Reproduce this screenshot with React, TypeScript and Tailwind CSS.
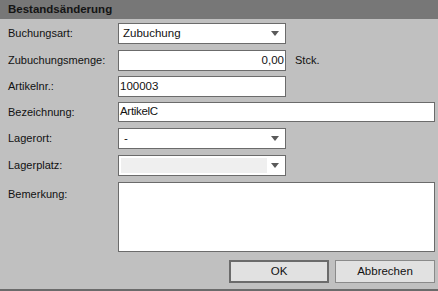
import React from "react";

const font = { fontFamily: '"Liberation Sans", Arial, sans-serif' };

function Arrow() {
  return (
    <svg width="8" height="5" viewBox="0 0 8 5" className="block">
      <path d="M0 0 H8 L4 5 Z" fill="#5a5a5a" />
    </svg>
  );
}

function Row({ label, children, mt, h = "h-[21px]", top = false }: { label: string; children: React.ReactNode; mt: string; h?: string; top?: boolean }) {
  return (
    <div className={`flex ${mt} ${h}`}>
      <div className={`w-[110px] shrink-0 text-[11px] text-[#111] ${top ? "pt-[4px]" : "flex items-center"}`}>{label}</div>
      {children}
    </div>
  );
}

export default function App() {
  return (
    <div className="w-[438px] h-[291px] bg-[#c0c0c0] flex flex-col" style={font}>
      <div className="h-[19px] bg-[#777777] pl-[8px] flex items-center text-[11.5px] font-bold text-[#141414]">
        Bestandsänderung
      </div>
      <div className="flex flex-col pl-[8px] pr-[3px] border-b-2 border-[#6b6b6b] flex-1">
        <Row label="Buchungsart:" mt="mt-[4px]">
          <div className="w-[168px] h-full bg-white border border-[#6b6b6b] flex items-center pl-[4px] pr-[6px] text-[11.5px] text-[#111]">
            <span className="flex-1">Zubuchung</span>
            <Arrow />
          </div>
        </Row>
        <Row label="Zubuchungsmenge:" mt="mt-[6px]">
          <div className="w-[168px] h-full bg-white border border-[#6b6b6b] flex items-center justify-end pr-[1px] text-[11.5px] text-[#111]">
            0,00
          </div>
          <div className="ml-[9px] flex items-center text-[11px] text-[#111]">Stck.</div>
        </Row>
        <Row label="Artikelnr.:" mt="mt-[5px]">
          <div className="w-[168px] h-full bg-white border border-[#6b6b6b] flex items-center pl-[1px] text-[11.5px] text-[#111]">
            100003
          </div>
        </Row>
        <Row label="Bezeichnung:" mt="mt-[5px]" h="h-[20px]">
          <div className="flex-1 h-full bg-white border border-[#6b6b6b] flex items-center pl-[1px] text-[11.5px] text-[#111] tracking-[-0.3px]">
            ArtikelC
          </div>
        </Row>
        <Row label="Lagerort:" mt="mt-[6px]">
          <div className="w-[168px] h-full bg-white border border-[#6b6b6b] flex items-center pl-[5px] pr-[6px] text-[11.5px] text-[#111]">
            <span className="flex-1">-</span>
            <Arrow />
          </div>
        </Row>
        <Row label="Lagerplatz:" mt="mt-[6px]">
          <div className="w-[168px] h-full bg-white border border-[#6b6b6b] flex items-center pl-[2px] pr-[6px] py-[2px]">
            <div className="w-[146px] h-full bg-[#efefef]" />
            <div className="flex-1" />
            <Arrow />
          </div>
        </Row>
        <Row label="Bemerkung:" mt="mt-[6px]" h="h-[70px]" top>
          <div className="flex-1 h-full bg-white border border-[#6b6b6b]" />
        </Row>
        <div className="flex justify-end gap-[6px] mt-[8px]">
          <button className="w-[100px] h-[23px] bg-[#e1e1e1] border-2 border-[#6b6b6b] text-[11.5px] text-[#111]">OK</button>
          <button className="w-[100px] h-[23px] bg-[#e1e1e1] border border-[#8a8a8a] text-[11.5px] text-[#111]">Abbrechen</button>
        </div>
      </div>
    </div>
  );
}
